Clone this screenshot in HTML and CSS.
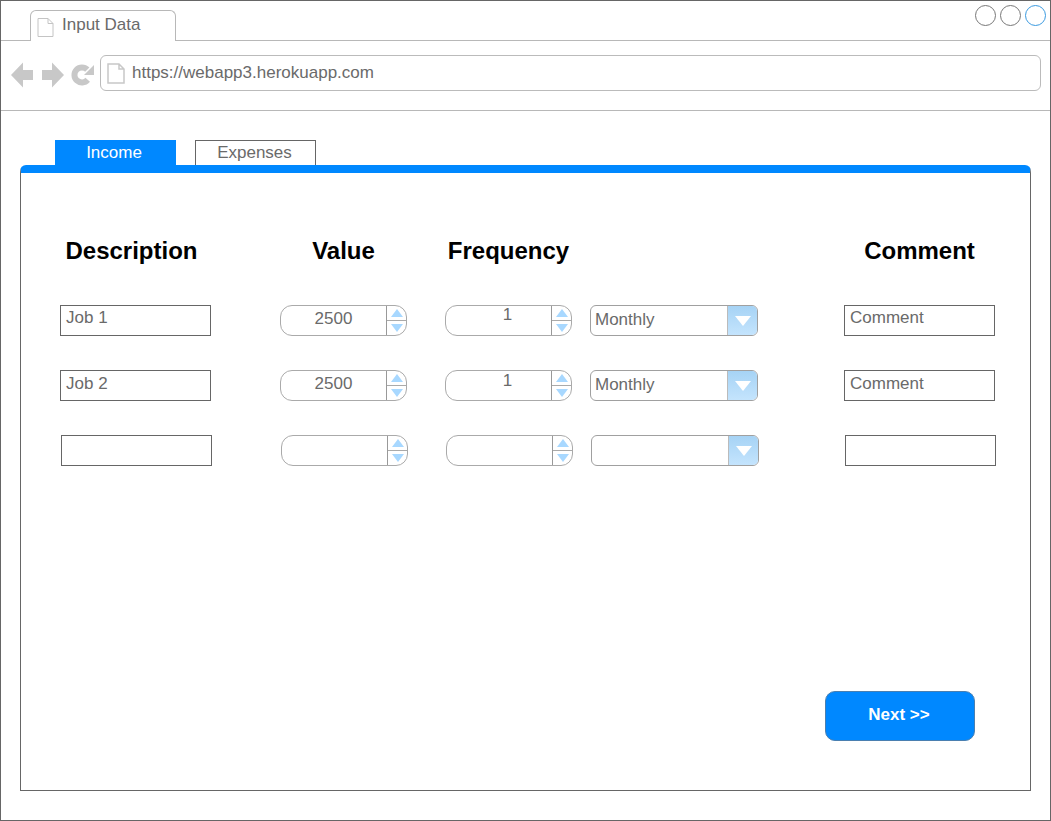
FILE: index.html
```html
<!DOCTYPE html>
<html>
<head>
<meta charset="utf-8"/>
<title>Input Data</title>
<link rel="stylesheet" href="styles.css">
</head>
<body>
<div id="window">
    <div id="tabstrip">
        <div id="page_tab">
            <svg class="doc_icon" width="17" height="19" viewBox="0 0 17 19"><path d="M1 .5h10l5 5v13H1zM11 .5v5h5" fill="#fff" stroke="#c4c4c4"/></svg>
            <span>Input Data</span>
        </div>
        <div id="window_buttons">
            <span class="circle"></span>
            <span class="circle"></span>
            <span class="circle active"></span>
        </div>
    </div>
    <div id="toolbar">
        <svg id="nav_icons" width="84" height="26" viewBox="0 0 84 26">
            <path d="M0 13 12 .5V8h10v10H12v7.5z" fill="#c8c8c8"/>
            <path d="M53 13 41 .5V8H31v10h10v7.5z" fill="#c8c8c8"/>
            <path d="M76.3 7.7a7.5 7.5 0 1 0 .4 10.1" fill="none" stroke="#c8c8c8" stroke-width="6"/>
            <path d="M83 3v10H73z" fill="#c8c8c8"/>
        </svg>
        <div id="address_bar">
            <svg class="doc_icon" width="18" height="21" viewBox="0 0 18 21"><path d="M1 1h11l5 5v14H1zM12 1v5h5" fill="#fff" stroke="#c8c8c8" stroke-width="1.5"/></svg>
            <span>https://webapp3.herokuapp.com</span>
        </div>
    </div>
    <div id="content">
        <div id="panel_tabs">
            <div class="panel_tab selected">Income</div>
            <div class="panel_tab">Expenses</div>
        </div>
        <div id="panel">
            <div class="grid">
                <h2 class="heading heading_desc">Description</h2>
                <h2 class="heading">Value</h2>
                <h2 class="heading">Frequency</h2>
                <div></div>
                <h2 class="heading">Comment</h2>
            </div>

            <div class="grid row first">
                <div class="field">Job 1</div>
                <div class="spinner"><span class="spin_value">2500</span><span class="spin_btns"><i class="up"></i><i class="down"></i></span></div>
                <div class="spinner"><span class="spin_value high">1</span><span class="spin_btns"><i class="up"></i><i class="down"></i></span></div>
                <div class="select"><span class="select_value">Monthly</span><span class="select_btn"><i></i></span></div>
                <div class="field">Comment</div>
            </div>

            <div class="grid row second">
                <div class="field">Job 2</div>
                <div class="spinner"><span class="spin_value">2500</span><span class="spin_btns"><i class="up"></i><i class="down"></i></span></div>
                <div class="spinner"><span class="spin_value high">1</span><span class="spin_btns"><i class="up"></i><i class="down"></i></span></div>
                <div class="select"><span class="select_value">Monthly</span><span class="select_btn"><i></i></span></div>
                <div class="field">Comment</div>
            </div>

            <div class="grid row last">
                <div class="field"></div>
                <div class="spinner"><span class="spin_value"></span><span class="spin_btns"><i class="up"></i><i class="down"></i></span></div>
                <div class="spinner"><span class="spin_value"></span><span class="spin_btns"><i class="up"></i><i class="down"></i></span></div>
                <div class="select"><span class="select_value"></span><span class="select_btn"><i></i></span></div>
                <div class="field"></div>
            </div>

            <div id="actions">
                <div id="next">Next &gt;&gt;</div>
            </div>
        </div>
    </div>
</div>
</body>
</html>
```
FILE: styles.css
```css
body {
    padding: 0;
    margin: 0;
    background: #fff;
    color: #6a6a6a;
    font-size: 17px;
    font-family: "Liberation Sans", Arial, sans-serif;
}
#window {
    box-sizing: border-box;
    width: 1051px;
    height: 821px;
    border: 1px solid #666;
    overflow: hidden;
}
#tabstrip {
    box-sizing: border-box;
    display: flex;
    height: 40px;
    padding: 4px 4px 0 29px;
    border-bottom: 1px solid #b8b8b8;
}
#page_tab {
    box-sizing: border-box;
    display: flex;
    align-items: flex-start;
    gap: 8px;
    width: 146px;
    height: 31px;
    margin-top: 5px;
    padding: 4px 0 0 6px;
    background: #fff;
    border: 1px solid #b8b8b8;
    border-bottom: 0;
    border-radius: 6px 6px 0 0;
}
#page_tab .doc_icon {
    margin-top: 3px;
}
#window_buttons {
    display: flex;
    gap: 4px;
    margin-left: auto;
}
.circle {
    box-sizing: border-box;
    width: 21px;
    height: 21px;
    border: 1px solid #777;
    border-radius: 50%;
}
.circle.active {
    border-color: #3a9ae0;
}
#toolbar {
    box-sizing: border-box;
    display: flex;
    align-items: flex-start;
    height: 70px;
    padding: 14px 9px 0 10px;
    border-bottom: 1px solid #b8b8b8;
}
#nav_icons {
    flex: none;
    margin: 7px 5px 0 0;
}
#address_bar {
    box-sizing: border-box;
    display: flex;
    align-items: center;
    gap: 7px;
    flex: 1;
    height: 36px;
    padding: 0 0 0 6px;
    border: 1px solid #bbb;
    border-radius: 6px;
}
#content {
    padding: 29px 19px 0;
}
#panel_tabs {
    display: flex;
    gap: 19px;
    height: 25px;
    padding-left: 35px;
}
.panel_tab {
    box-sizing: border-box;
    width: 121px;
    height: 25px;
    padding-right: 2px;
    line-height: 23px;
    text-align: center;
    background: #fff;
    border: 1px solid #666;
    border-bottom: 0;
}
.panel_tab.selected {
    padding-right: 3px;
    background: #0088ff;
    border-color: #0088ff;
    color: #fff;
}
#panel {
    box-sizing: border-box;
    height: 626px;
    padding: 60px 0 0 39px;
    border: 1px solid #666;
    border-top: 8px solid #0088ff;
    border-radius: 6px 6px 0 0;
}
.grid {
    display: grid;
    grid-template-columns: 151px 196px 165px 186px 237px;
}
.grid > :nth-child(2) { margin-left: 69px; }
.grid > :nth-child(3) { margin-left: 38px; }
.grid > :nth-child(4) { margin-left: 18px; }
.grid > :nth-child(5) { margin-left: 86px; }
.heading {
    margin: 0;
    height: 36px;
    line-height: 36px;
    color: #000;
    font-size: 24px;
    font-weight: bold;
    text-align: center;
    white-space: nowrap;
}
.heading_desc {
    padding-right: 8px;
}
.row {
    height: 31px;
    margin-top: 34px;
}
.row.first {
    margin-top: 36px;
}
.row.last {
    margin-left: 1px;
}
.field {
    box-sizing: border-box;
    height: 31px;
    padding: 2px 0 0 5px;
    border: 1px solid #666;
    white-space: nowrap;
}
.row.second .field {
    padding-top: 3px;
}
.spinner {
    box-sizing: border-box;
    display: flex;
    height: 31px;
    border: 1px solid #aaa;
    border-radius: 12px;
    overflow: hidden;
}
.spin_value {
    flex: 1;
    line-height: 26px;
    text-align: center;
}
.spin_value.high {
    padding-left: 18px;
    line-height: 17px;
}
.row.second .spin_value.high {
    line-height: 19px;
}
.spin_btns {
    box-sizing: border-box;
    display: flex;
    flex-direction: column;
    width: 20px;
    border-left: 1px solid #999;
}
.spin_btns i {
    flex: 1;
    display: flex;
    align-items: center;
    justify-content: center;
}
.spin_btns i.up {
    border-bottom: 1px solid #aaa;
}
.spin_btns i::before {
    content: "";
    border-left: 6px solid transparent;
    border-right: 6px solid transparent;
}
.spin_btns i.up::before {
    border-bottom: 8px solid #a8d8ff;
}
.spin_btns i.down::before {
    border-top: 8px solid #a8d8ff;
}
.select {
    box-sizing: border-box;
    display: flex;
    height: 31px;
    border: 1px solid #a0a0a0;
    border-radius: 6px;
    overflow: hidden;
}
.select_value {
    flex: 1;
    padding-left: 4px;
    line-height: 28px;
}
.select_btn {
    display: flex;
    align-items: center;
    justify-content: center;
    width: 29px;
    background: linear-gradient(#a6d3f5, #c4e4fd);
    border-left: 1px solid #bbb;
}
.select_btn i {
    border-left: 8px solid transparent;
    border-right: 8px solid transparent;
    border-top: 10px solid #fff;
}
#actions {
    display: flex;
    justify-content: flex-end;
    width: 915px;
    margin-top: 225px;
}
#next {
    box-sizing: border-box;
    width: 150px;
    height: 50px;
    padding-right: 2px;
    line-height: 46px;
    text-align: center;
    color: #fff;
    font-weight: bold;
    background: #0088ff;
    border: 1px solid #4a7fb0;
    border-radius: 10px;
}
```
